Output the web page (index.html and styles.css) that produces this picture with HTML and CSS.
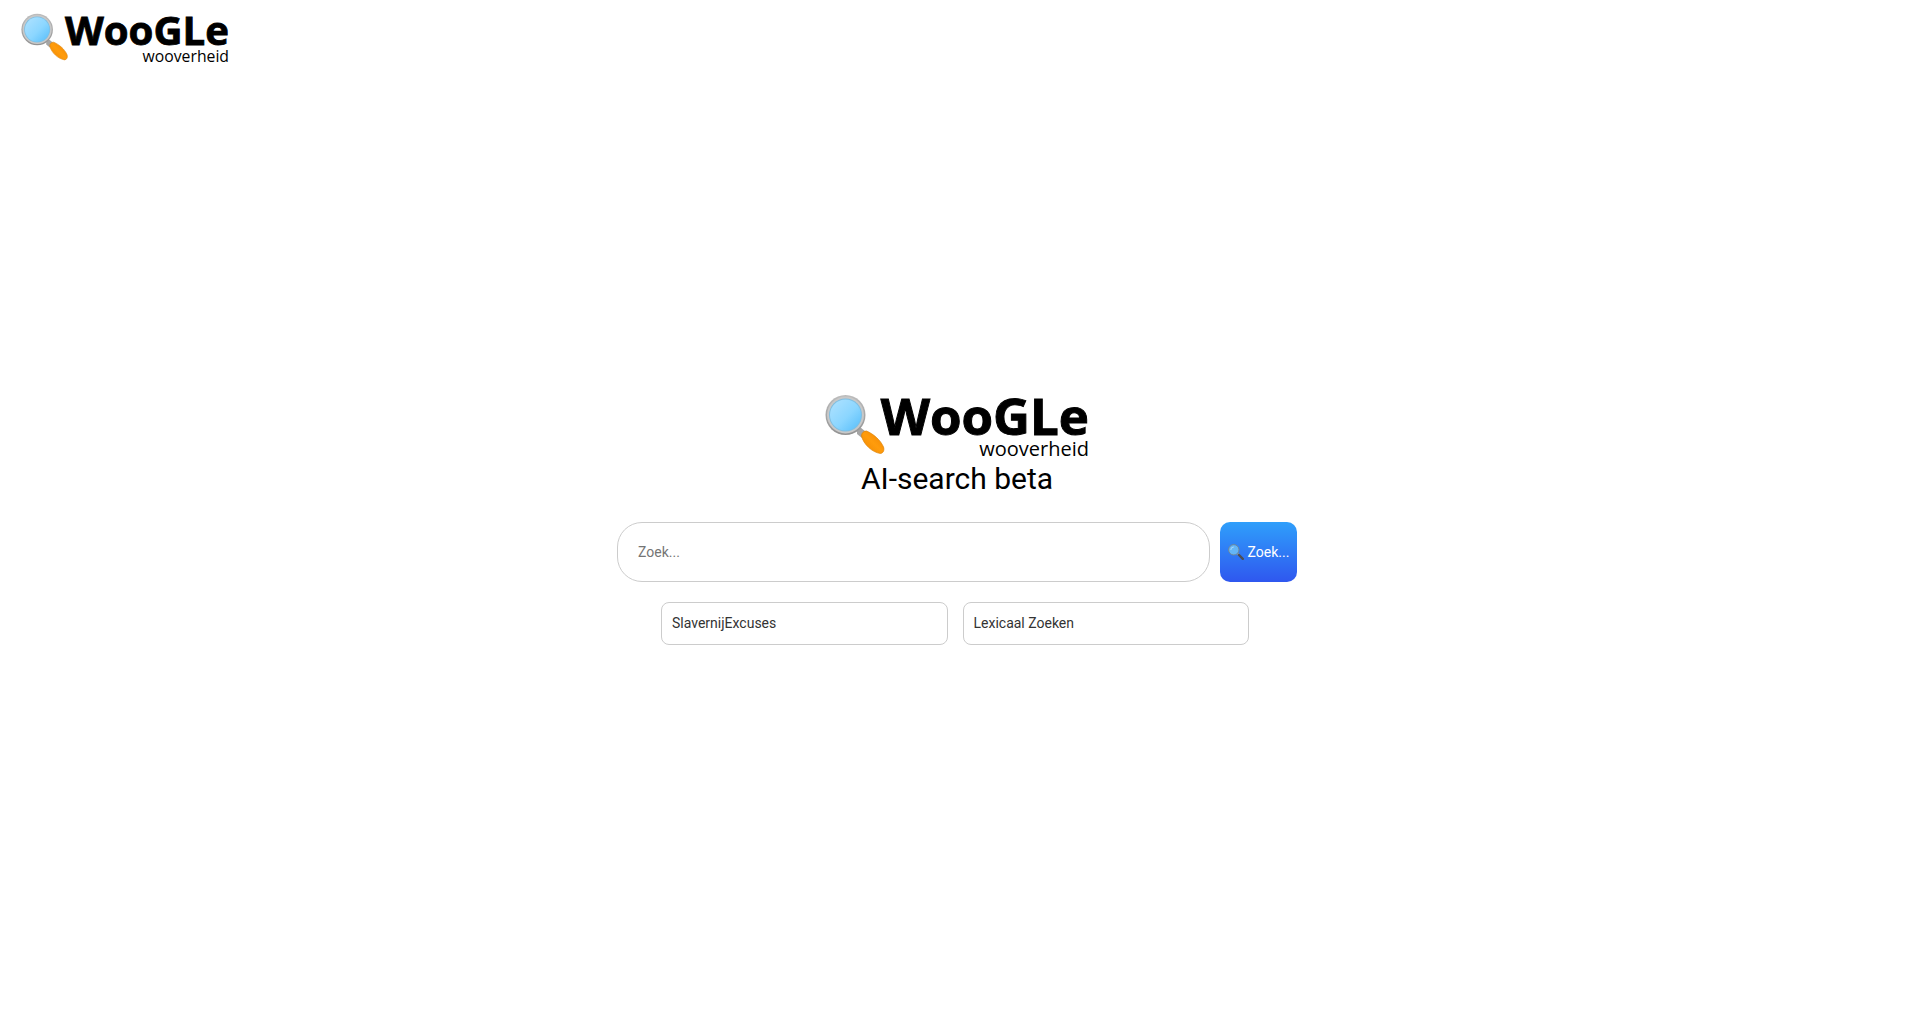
FILE: index.html
```html
<!DOCTYPE html>
<html lang="nl">
<head>
<meta charset="utf-8">
<meta name="viewport" content="width=device-width, initial-scale=1">
<title>WooGLe AI-search</title>
<link rel="stylesheet" href="styles.css">
</head>
<body>
<svg class="defs" aria-hidden="true">
  <defs>
    <linearGradient id="rim" x1="0" y1="0" x2="0" y2="1"><stop offset="0" stop-color="#bdbdbd"/><stop offset="1" stop-color="#929292"/></linearGradient>
    <linearGradient id="glass" x1="0" y1="0" x2="1" y2="1"><stop offset="0" stop-color="#b0e2ff"/><stop offset=".55" stop-color="#8bd6ff"/><stop offset="1" stop-color="#55bdfa"/></linearGradient>
    <linearGradient id="grip" x1="0" y1="1" x2="1" y2="0"><stop offset="0" stop-color="#ee8500"/><stop offset=".5" stop-color="#ff9c0c"/><stop offset="1" stop-color="#ef8200"/></linearGradient>
    <symbol id="logo" viewBox="0 0 264 66">
      <path d="M32 36l3-3 6 5-4 6-5-4z" fill="#a5a5a5"/>
      <circle cx="20.500" cy="21" r="20" fill="url(#rim)"/>
      <circle cx="20.500" cy="21" r="18.500" fill="#c8c8c8"/>
      <circle cx="20.500" cy="21" r="16.500" fill="#7fbfe2"/>
      <circle cx="20.500" cy="21" r="15.500" fill="url(#glass)"/>
      <path d="M36.500 42c0-3 2-5 5-5 7 3 14 9 17 16 1 3 0 6-3 6.500-8-1-17-9-19-17.500z" fill="url(#grip)" stroke="#dc8206" stroke-width=".7"/>
      <text class="logo-name" x="264" y="41">WooGLe</text>
      <text class="logo-sub" x="264" y="62">wooverheid</text>
    </symbol>
  </defs>
</svg>
<header class="header">
  <a href="#" aria-label="WooGLe wooverheid"><svg class="header-logo"><use href="#logo"/></svg></a>
</header>
<main class="main">
  <section class="search">
    <svg class="main-logo" role="img" aria-label="WooGLe wooverheid"><use href="#logo"/></svg>
    <h1 class="title">AI-search beta</h1>
    <form class="form">
      <input class="query" type="text" placeholder="Zoek..." aria-label="Zoek">
      <button class="submit" type="submit">
        <svg class="lens" viewBox="0 0 16 16" aria-hidden="true">
          <path d="M9.500 9.500l1.500 1.500" stroke="#8a979f" stroke-width="2"/>
          <path d="M11 11l3.800 3.800" stroke="#4d4f55" stroke-width="2.400" stroke-linecap="round"/>
          <circle cx="5.800" cy="5.800" r="5.200" fill="#64b5f6" stroke="#6f8796"/>
          <path d="M2.800 6a3 3 0 0 1 3-3" fill="none" stroke="#a8d9fc"/>
        </svg>
        Zoek...
      </button>
    </form>
  </section>
  <nav class="links">
    <a class="link" href="#">SlavernijExcuses</a>
    <a class="link" href="#">Lexicaal Zoeken</a>
  </nav>
</main>
</body>
</html>
```
FILE: styles.css
```css
* { box-sizing: border-box; }
body {
  margin: 0;
  min-height: 100vh;
  display: flex;
  flex-direction: column;
  background: #fff;
  color: #000;
  font: 14px/20px Roboto, sans-serif;
}
.defs { position: absolute; width: 0; height: 0; }
.header { padding: 13px 21px 11px; }
.header-logo { display: block; width: 208px; height: 52px; }
.logo-name, .logo-sub { font-family: "Open Sans", sans-serif; text-anchor: end; }
.logo-name { font-size: 51px; font-weight: 700; stroke: #000; stroke-width: 1px; }
.logo-sub { font-size: 20px; }
.main {
  flex: 1;
  display: flex;
  flex-direction: column;
  align-items: center;
  justify-content: center;
  gap: 20px;
  padding: 0 16px 63px;
}
.search {
  width: 100%;
  max-width: 684px;
  padding-left: 4px;
  display: flex;
  flex-direction: column;
  align-items: center;
}
.main-logo { width: 264px; height: 66px; }
.title { margin: 0 0 24px; font-size: 30px; line-height: 38px; font-weight: 400; }
.form { display: flex; gap: 10px; width: 100%; }
.query {
  flex: 1;
  min-width: 0;
  height: 60px;
  padding: 0 20px;
  border: 1px solid #ccc;
  border-radius: 25px;
  background: #fff;
  font: inherit;
}
.query::placeholder { color: #757575; }
.submit {
  display: flex;
  align-items: center;
  justify-content: center;
  gap: 4px;
  width: 77px;
  padding: 0;
  border: 0;
  border-radius: 10px;
  background: linear-gradient(#2f9ffb, #2f57ef);
  color: #fff;
  font: inherit;
}
.lens { width: 16px; height: 16px; }
.links { display: flex; gap: 15px; width: 100%; max-width: 588px; }
.link {
  flex: 1;
  padding: 10px;
  border: 1px solid #ccc;
  border-radius: 8px;
  color: #333;
  line-height: 21px;
  text-decoration: none;
}
```
